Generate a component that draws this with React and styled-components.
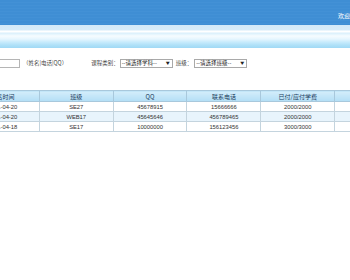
import React from "react";
import styled, { createGlobalStyle } from "styled-components";

const Global = createGlobalStyle`
  html, body { margin: 0; padding: 0; background: #ffffff; overflow: hidden; }
  body { font-family: "Noto Sans CJK SC", "Liberation Sans", sans-serif; color: #333; }
`;

const Page = styled.div`
  width: 350px;
  height: 280px;
  overflow: hidden;
  background: #fff;
`;

const TopBar = styled.div`
  height: 25px;
  background: repeating-linear-gradient(180deg, #3f8ed4 0px, #3f8ed4 2px, #4391d6 2px, #4391d6 3px);
  display: flex;
  justify-content: flex-end;
  align-items: flex-end;
  padding-bottom: 5px;
  box-sizing: border-box;
  overflow: hidden;
`;

const Welcome = styled.span`
  color: #fff;
  font-size: 6px;
  white-space: nowrap;
  margin-right: -30px;
`;

const Band = styled.div`
  height: 23px;
  background: linear-gradient(180deg,
    #d3e9f8 0px, #d7ecf9 5px, #ffffff 6px, #ffffff 7px,
    #d9effb 8px, #e2f4fd 9px, #f6fcff 11px, #e6f6fe 14px,
    #c8ebfc 17px, #b0e1f8 20px, #9fd9f5 23px);
`;

const Search = styled.div`
  display: flex;
  align-items: center;
  height: 10px;
  margin: 10px 0 0 -40px;
  font-size: 5.5px;
  white-space: nowrap;
`;

const TextInput = styled.div`
  width: 60px;
  height: 9px;
  border: 1px solid #b5b5b5;
  box-sizing: border-box;
  background: #fff;
`;

const Label = styled.span`
  margin-left: ${(p) => p.$ml}px;
  color: #444;
`;

const Select = styled.div`
  width: 53px;
  height: 9px;
  margin-left: ${(p) => p.$ml}px;
  border: 1px solid #a9a9a9;
  box-sizing: border-box;
  display: flex;
  align-items: center;
  justify-content: space-between;
  padding: 0 2px 0 1px;
  background: #fff;
  color: #222;
  font-size: 5.5px;
`;

const Arrow = styled.span`
  font-size: 4px;
  color: #222;
`;

const Table = styled.table`
  margin: 22px 0 0 -35px;
  border-collapse: collapse;
  table-layout: fixed;
  width: 444px;
  font-size: 6px;
`;

const Th = styled.th`
  height: 10px;
  padding: 0;
  font-weight: normal;
  color: #1a3b5c;
  background: linear-gradient(180deg, #d3edfb 0%, #b3def6 100%);
  border: 1px solid #a8c8dc;
  text-align: center;
  white-space: nowrap;
  overflow: hidden;
`;

const Tr = styled.tr`
  background: ${(p) => (p.$alt ? "#e8f4fc" : "#ffffff")};
`;

const Td = styled.td`
  height: 9px;
  padding: 0;
  border: 1px solid #c4d4de;
  text-align: center;
  color: #333;
  white-space: nowrap;
  overflow: hidden;
  font-family: "Liberation Sans", "Noto Sans CJK SC", sans-serif;
  font-size: 5.8px;
`;

const rows = [
  ["2021-04-20", "SE27", "45678915", "15666666", "2000/2000", ""],
  ["2021-04-20", "WEB17", "45645646", "456789465", "2000/2000", ""],
  ["2021-04-18", "SE17", "10000000", "156123456", "3000/3000", ""],
];

const heads = ["报名时间", "班级", "QQ", "联系电话", "已付/应付学费", "操作"];

export default function App() {
  return (
    <Page>
      <Global />
      <TopBar>
        <Welcome>欢迎您，管理员</Welcome>
      </TopBar>
      <Band />
      <Search>
        <TextInput />
        <Label $ml={3}>（姓名|电话|QQ）</Label>
        <Label $ml={24}>课程类别：</Label>
        <Select $ml={1}>
          <span>--请选择学科--</span>
          <Arrow>▼</Arrow>
        </Select>
        <Label $ml={3}>班级：</Label>
        <Select $ml={2}>
          <span>--请选择班级--</span>
          <Arrow>▼</Arrow>
        </Select>
      </Search>
      <Table>
        <thead>
          <tr>
            {heads.map((h, i) => (
              <Th key={i}>{h}</Th>
            ))}
          </tr>
        </thead>
        <tbody>
          {rows.map((r, i) => (
            <Tr key={i} $alt={i === 1}>
              {r.map((c, j) => (
                <Td key={j}>{c}</Td>
              ))}
            </Tr>
          ))}
        </tbody>
      </Table>
    </Page>
  );
}
